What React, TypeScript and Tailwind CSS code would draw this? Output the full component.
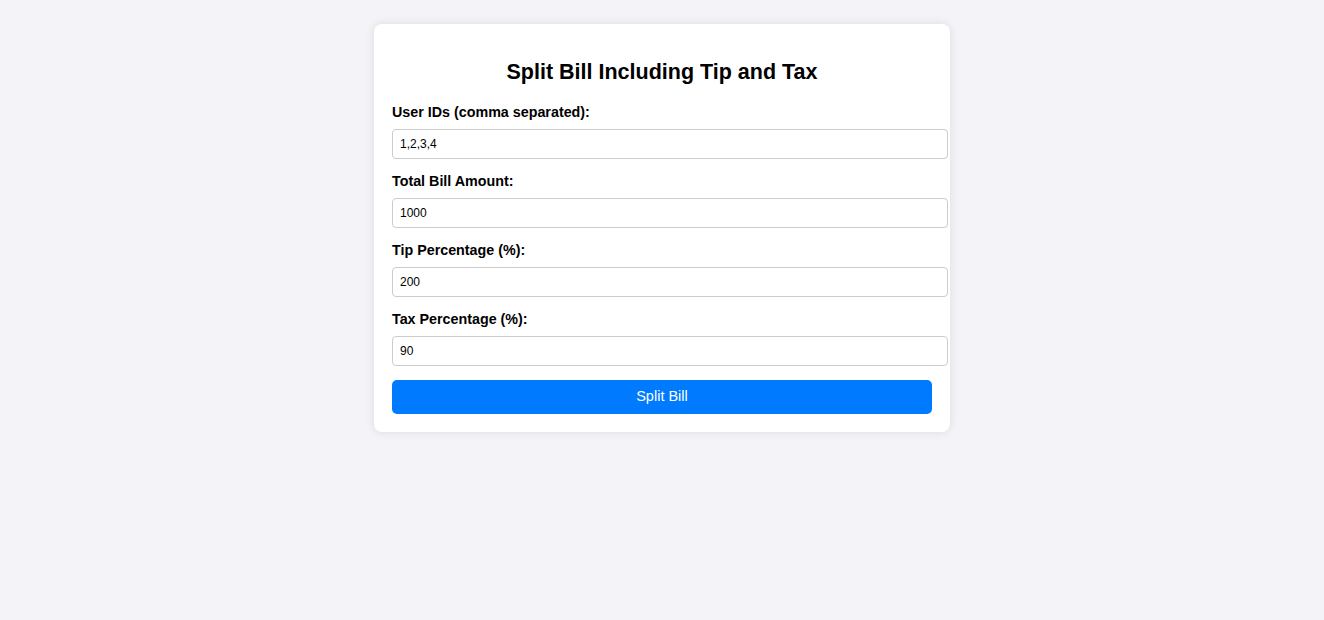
export default function App() {
  const fields = [
    { label: "User IDs (comma separated):", value: "1,2,3,4" },
    { label: "Total Bill Amount:", value: "1000" },
    { label: "Tip Percentage (%):", value: "200" },
    { label: "Tax Percentage (%):", value: "90" },
  ];

  return (
    <div className="min-h-[620px] bg-[#f4f4f8] pt-6 font-['Liberation_Sans',Arial,sans-serif]">
      <div className="mx-auto w-[576px] rounded-lg bg-white p-[18px] shadow-[0_0_10px_rgba(0,0,0,0.1)]">
        <h2 className="mb-[19px] mt-[18px] text-center text-[21.5px] font-bold leading-[25px] text-black">
          Split Bill Including Tip and Tax
        </h2>
        {fields.map((f) => (
          <div key={f.label}>
            <label className="mb-[9px] block text-[14.3px] font-bold leading-4 text-black">
              {f.label}
            </label>
            <input
              type="text"
              defaultValue={f.value}
              className="mb-[14px] block h-[30px] w-[calc(100%+16px)] rounded border border-[#ccc] bg-white pl-[7px] pr-2 text-[12px] leading-[14px] text-black outline-none"
            />
          </div>
        ))}
        <button className="block h-[34px] w-full rounded-[5px] bg-[#007bff] text-[14.5px] text-white">
          Split Bill
        </button>
      </div>
    </div>
  );
}
